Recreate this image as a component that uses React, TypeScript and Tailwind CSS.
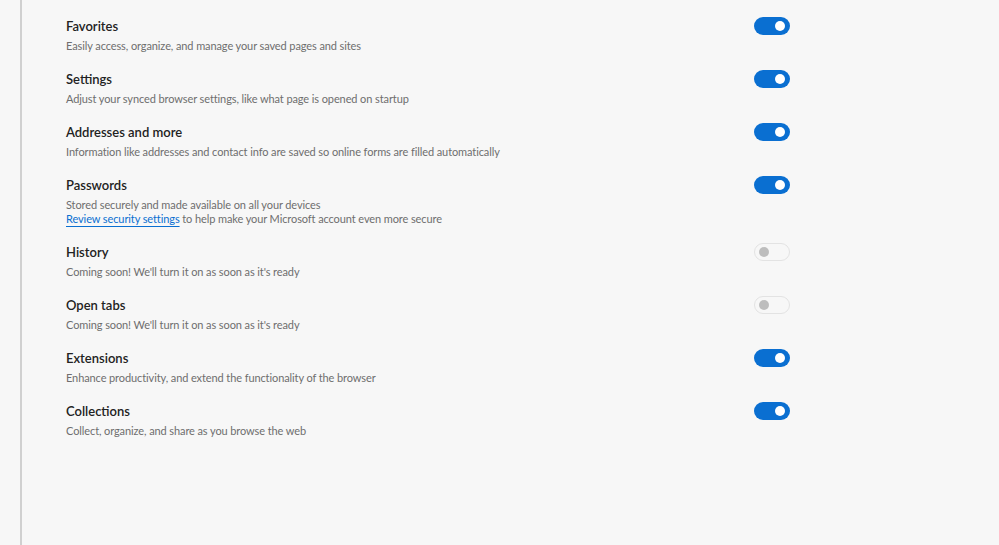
import React from 'react';

type SyncItem = {
  title: string;
  description: string;
  enabled: boolean;
  link?: { text: string; rest: string };
};

const items: SyncItem[] = [
  { title: 'Favorites', description: 'Easily access, organize, and manage your saved pages and sites', enabled: true },
  { title: 'Settings', description: 'Adjust your synced browser settings, like what page is opened on startup', enabled: true },
  {
    title: 'Addresses and more',
    description: 'Information like addresses and contact info are saved so online forms are filled automatically',
    enabled: true,
  },
  {
    title: 'Passwords',
    description: 'Stored securely and made available on all your devices',
    enabled: true,
    link: { text: 'Review security settings', rest: ' to help make your Microsoft account even more secure' },
  },
  { title: 'History', description: "Coming soon! We'll turn it on as soon as it's ready", enabled: false },
  { title: 'Open tabs', description: "Coming soon! We'll turn it on as soon as it's ready", enabled: false },
  { title: 'Extensions', description: 'Enhance productivity, and extend the functionality of the browser', enabled: true },
  { title: 'Collections', description: 'Collect, organize, and share as you browse the web', enabled: true },
];

const Toggle: React.FC<{ on: boolean }> = ({ on }) =>
  on ? (
    <div className="flex h-[18px] w-[36px] items-center justify-end rounded-full bg-[#0a6fd1] pr-[5px]">
      <div className="h-[10px] w-[10px] rounded-full bg-white" />
    </div>
  ) : (
    <div className="flex h-[18px] w-[36px] items-center rounded-full border border-[#e3e3e3] pl-[4px]">
      <div className="h-[10px] w-[10px] rounded-full bg-[#bdbdbd]" />
    </div>
  );

export default function App() {
  return (
    <div className="flex h-[545px] w-[999px] bg-[#f7f7f7] font-['Lato',sans-serif]">
      <div className="ml-[20px] h-full w-[2px] bg-[#d0d0d0]" />
      <div className="flex w-[768px] flex-col gap-[16px] pl-[44px] pt-[16px]">
        {items.map((item) => (
          <div key={item.title} className="flex items-start justify-between">
            <div className="flex flex-col">
              <div className="text-[13px] font-semibold leading-[20px] text-[#222222]">{item.title}</div>
              <div className="mt-[3px] text-[11px] leading-[14px] tracking-[-0.1px] text-[#6e6e6e]">
                {item.description}
              </div>
              {item.link && (
                <div className="text-[11px] leading-[14px] tracking-[-0.1px] text-[#6e6e6e]">
                  <span className="text-[#0a6fd1] underline underline-offset-[3px]">{item.link.text}</span>
                  {item.link.rest}
                </div>
              )}
            </div>
            <div className="pt-[1px]">
              <Toggle on={item.enabled} />
            </div>
          </div>
        ))}
      </div>
    </div>
  );
}
